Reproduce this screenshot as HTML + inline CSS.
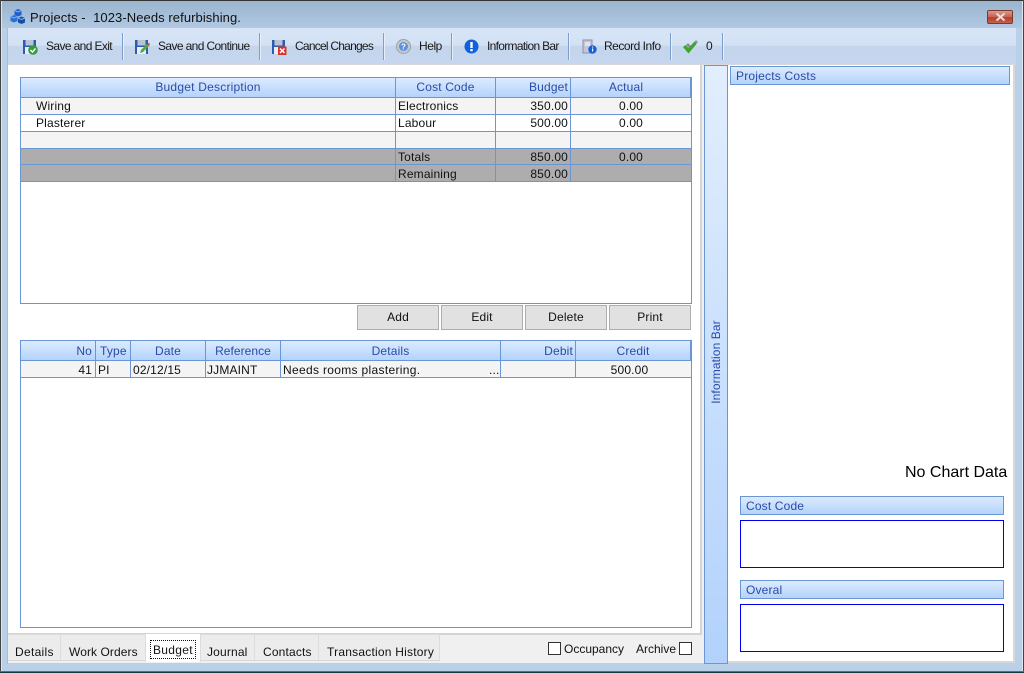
<!DOCTYPE html>
<html><head><meta charset="utf-8"><style>
html,body{margin:0;padding:0;background:#fff}
#w{position:relative;width:1024px;height:673px;overflow:hidden;font:12px/14px "Liberation Sans",sans-serif;letter-spacing:.16px;color:#111;background:#b9d0e8}
#w div,#w span.a,#w svg{position:absolute}
.t{white-space:nowrap;line-height:14px}
.h{color:#2a4ba6;letter-spacing:.16px}
.c{text-align:center}.r{text-align:right}
.hd{background:linear-gradient(#dcebfe,#b4d3fc)}
.sep{width:1px;height:27px;top:33px;background:#7d9fd0;box-shadow:1px 0 0 #e6eefa}
.ln{background:#6a96d6}
.btn{top:305px;width:80px;height:23px;background:#e1e1e1;border:1px solid #adadad;text-align:center;line-height:23px}
.tab{top:640px;white-space:nowrap;line-height:14px}
.tb{top:39px;white-space:nowrap;line-height:14px;color:#1a1a1a;letter-spacing:-.62px}
</style></head><body><div id="w">
<div style="left:0;top:0;width:1024px;height:1px;background:#333"></div>
<div style="left:1px;top:1px;width:1022px;height:27px;background:linear-gradient(#9bb5cf,#b0c8e2)"></div>
<div style="left:0;top:0;width:1px;height:673px;background:#444"></div>
<div style="left:1023px;top:0;width:1px;height:673px;background:#444"></div>
<div style="left:0;top:671px;width:1024px;height:2px;background:linear-gradient(#2fa9c4,#111)"></div>
<div style="left:1px;top:1px;width:1px;height:670px;background:#dbe6f1"></div>
<div style="left:1022px;top:1px;width:1px;height:670px;background:#dbe6f1"></div>
<div style="left:7px;top:28px;width:1px;height:636px;background:#a9bdd3"></div>

<svg style="left:10px;top:9px" width="16" height="16" viewBox="0 0 16 16"><path d="M4.500 1.500L8 0l3.500 1.500V6L8 7.500 4.500 6z" fill="#1f5fc4"/><path d="M0.500 7.500L4 6l3.500 1.500V12L4 13.500.5 12z" fill="#2a6fd6"/><path d="M8 9l3.500-1.500L15 9v4.500L11.500 15 8 13.500z" fill="#174ea6"/><path d="M4.500 1.500L8 3l3.500-1.500M.5 7.500L4 9l3.500-1.500M8 9l3.500 1.500L15 9" stroke="#7fb2f2" fill="none"/></svg>
<div class="t" style="left:30px;top:11px;color:#111;font-size:13px;letter-spacing:.08px">Projects -&nbsp; 1023-Needs refurbishing.</div>
<div style="left:987px;top:10px;width:26px;height:14px;border:1px solid #7a3a32;border-radius:2px;box-sizing:border-box;background:linear-gradient(#dc9a8c 0,#c7604f 50%,#b13e2d 55%,#c8604c 100%)"></div>
<svg style="left:995px;top:13px" width="11" height="8" viewBox="0 0 11 8"><path d="M1.500 .5l8 7M9.500 .5l-8 7" stroke="#e6e0dc" stroke-width="2"/></svg>

<div style="left:8px;top:28px;width:1008px;height:36px;background:linear-gradient(#d7e5f7 0,#d3e1f4 48%,#c4d5ec 50%,#c5d6ee 100%)"></div>
<div class="sep" style="left:122px"></div><div class="sep" style="left:259px"></div><div class="sep" style="left:383px"></div><div class="sep" style="left:451px"></div><div class="sep" style="left:568px"></div><div class="sep" style="left:670px"></div><div class="sep" style="left:722px"></div>

<svg style="left:23px;top:40px" width="15" height="15" viewBox="0 0 15 15"><path d="M0 0h13v14H0z" fill="#2b5cb0"/><path d="M2.500 0h8v5.500h-8z" fill="#b9c3d3"/><path d="M2 7h9v7H2z" fill="#e9eef5"/><circle cx="10" cy="10" r="4.800" fill="#2f9e3a"/><path d="M7.500 10l2 2 3-3.500" stroke="#fff" stroke-width="1.500" fill="none"/></svg>
<div class="tb" style="left:46px">Save and Exit</div>
<svg style="left:135px;top:40px" width="15" height="15" viewBox="0 0 15 15"><path d="M0 0h13v14H0z" fill="#2b5cb0"/><path d="M2.500 0h8v5.500h-8z" fill="#b9c3d3"/><path d="M2 7h9v7H2z" fill="#e9eef5"/><path d="M5 13l1-3 6-6 2 2-6 6z" fill="#55a83a"/><path d="M12 4l2 2 1-2-1-1z" fill="#d9443a"/></svg>
<div class="tb" style="left:158px">Save and Continue</div>
<svg style="left:272px;top:40px" width="15" height="15" viewBox="0 0 15 15"><path d="M0 0h13v14H0z" fill="#2b5cb0"/><path d="M2.500 0h8v5.500h-8z" fill="#b9c3d3"/><path d="M2 7h9v7H2z" fill="#e9eef5"/><path d="M6 6.500h8.500V15H6z" fill="#d9342b"/><path d="M8 8.500l4.500 4.500M12.500 8.500L8 13" stroke="#fff" stroke-width="1.500"/></svg>
<div class="tb" style="left:295px;letter-spacing:-.76px">Cancel Changes</div>
<svg style="left:396px;top:39px" width="15" height="15" viewBox="0 0 15 15"><circle cx="7.500" cy="7.500" r="7" fill="#c3c8cf" stroke="#9aa1ab"/><circle cx="7.500" cy="7.500" r="4.500" fill="#5c8fdc"/><text x="7.500" y="10.500" font-size="8" font-weight="bold" text-anchor="middle" fill="#fff" font-family="Liberation Sans">?</text></svg>
<div class="tb" style="left:419px;letter-spacing:-.45px">Help</div>
<svg style="left:464px;top:39px" width="15" height="15" viewBox="0 0 15 15"><circle cx="7.500" cy="7.500" r="7" fill="#1460d8"/><path d="M6.300 3h2.400v6H6.300zM6.300 10h2.400v2.200H6.300z" fill="#fff"/></svg>
<div class="tb" style="left:487px;letter-spacing:-.69px">Information Bar</div>
<svg style="left:582px;top:39px" width="15" height="15" viewBox="0 0 15 15"><path d="M1 1h9v13H1z" fill="#c4c6d8" stroke="#8d90a8"/><path d="M3 4h5M3 6h5" stroke="#fff"/><circle cx="10.500" cy="10.500" r="4.200" fill="#1460d8"/><path d="M10 7.500h1.200v1H10zM10 9.500h1.200v3H10z" fill="#fff"/></svg>
<div class="tb" style="left:604px;letter-spacing:-.48px">Record Info</div>
<svg style="left:682px;top:39px" width="16" height="15" viewBox="0 0 16 15"><path d="M4 6l2-2 3 3 5-6 2 2-7 8z" fill="#8d90a0"/><path d="M1 8l2.500-2 3 3 6-6.500 2 2.500-8 9.500z" fill="#3fa52f"/></svg>
<div class="tb" style="left:706px;letter-spacing:0">0</div>

<!-- left panel -->
<div style="left:8px;top:64px;width:1008px;height:1px;background:#d8d8d8"></div>
<div style="left:8px;top:65px;width:692px;height:568px;background:#fff;border-right:2px solid #d4d4d4;border-bottom:2px solid #d4d4d4;box-sizing:content-box"></div>
<div style="left:8px;top:635px;width:694px;height:28px;background:#f0f0f0"></div>
<div style="left:702px;top:65px;width:2px;height:598px;background:#f0f0f0"></div>

<!-- grid 1 -->
<div style="left:20px;top:77px;width:670px;height:225px;border:1px solid #6a96d6;background:#fff"></div>
<div class="hd" style="left:21px;top:78px;width:670px;height:19px"></div>
<div style="left:21px;top:98px;width:670px;height:16px;background:#f4f4f4"></div>
<div style="left:21px;top:132px;width:670px;height:16px;background:#f4f4f4"></div>
<div style="left:21px;top:149px;width:670px;height:32px;background:#adadad"></div>
<div class="ln" style="left:21px;top:97px;width:670px;height:1px"></div>
<div class="ln" style="left:21px;top:114px;width:670px;height:1px"></div>
<div class="ln" style="left:21px;top:131px;width:670px;height:1px"></div>
<div class="ln" style="left:21px;top:148px;width:670px;height:1px"></div>
<div class="ln" style="left:21px;top:164px;width:670px;height:1px"></div>
<div class="ln" style="left:21px;top:181px;width:670px;height:1px"></div>
<div class="ln" style="left:395px;top:78px;width:1px;height:103px"></div>
<div class="ln" style="left:495px;top:78px;width:1px;height:103px"></div>
<div class="ln" style="left:570px;top:78px;width:1px;height:103px"></div>
<div class="ln" style="left:690px;top:78px;width:2px;height:19px"></div>
<div class="t h c" style="left:21px;width:374px;top:80px;letter-spacing:.22px">Budget Description</div>
<div class="t h c" style="left:396px;width:99px;top:80px">Cost Code</div>
<div class="t h r" style="left:496px;width:72px;top:80px">Budget</div>
<div class="t h c" style="left:571px;width:110px;top:80px">Actual</div>
<div class="t" style="left:36px;top:99px">Wiring</div>
<div class="t" style="left:398px;top:99px">Electronics</div>
<div class="t r" style="left:496px;width:72px;top:99px">350.00</div>
<div class="t" style="left:619px;top:99px">0.00</div>
<div class="t" style="left:36px;top:116px">Plasterer</div>
<div class="t" style="left:398px;top:116px">Labour</div>
<div class="t r" style="left:496px;width:72px;top:116px">500.00</div>
<div class="t" style="left:619px;top:116px">0.00</div>
<div class="t" style="left:398px;top:150px">Totals</div>
<div class="t r" style="left:496px;width:72px;top:150px">850.00</div>
<div class="t" style="left:619px;top:150px">0.00</div>
<div class="t" style="left:398px;top:167px">Remaining</div>
<div class="t r" style="left:496px;width:72px;top:167px">850.00</div>

<div class="btn" style="left:357px">Add</div>
<div class="btn" style="left:441px">Edit</div>
<div class="btn" style="left:525px">Delete</div>
<div class="btn" style="left:609px">Print</div>

<!-- grid 2 -->
<div style="left:20px;top:340px;width:670px;height:286px;border:1px solid #6a96d6;background:#fff"></div>
<div class="hd" style="left:21px;top:341px;width:670px;height:19px"></div>
<div style="left:21px;top:361px;width:670px;height:16px;background:#f4f4f4"></div>
<div class="ln" style="left:21px;top:360px;width:670px;height:1px"></div>
<div class="ln" style="left:21px;top:377px;width:670px;height:1px"></div>
<div class="ln" style="left:95px;top:341px;width:1px;height:36px"></div>
<div class="ln" style="left:130px;top:341px;width:1px;height:36px"></div>
<div class="ln" style="left:205px;top:341px;width:1px;height:36px"></div>
<div class="ln" style="left:280px;top:341px;width:1px;height:36px"></div>
<div class="ln" style="left:500px;top:341px;width:1px;height:36px"></div>
<div class="ln" style="left:575px;top:341px;width:1px;height:36px"></div>
<div class="ln" style="left:690px;top:341px;width:2px;height:19px"></div>
<div class="t h r" style="left:21px;width:71px;top:344px">No</div>
<div class="t h" style="left:100px;top:344px">Type</div>
<div class="t h c" style="left:131px;width:74px;top:344px">Date</div>
<div class="t h c" style="left:206px;width:74px;top:344px;letter-spacing:.05px">Reference</div>
<div class="t h c" style="left:281px;width:219px;top:344px">Details</div>
<div class="t h r" style="left:501px;width:72px;top:344px">Debit</div>
<div class="t h c" style="left:576px;width:114px;top:344px">Credit</div>
<div class="t r" style="left:21px;width:71px;top:363px">41</div>
<div class="t" style="left:98px;top:363px">PI</div>
<div class="t" style="left:133px;top:363px">02/12/15</div>
<div class="t" style="left:207px;top:363px">JJMAINT</div>
<div class="t" style="left:283px;top:363px;letter-spacing:.32px">Needs rooms plastering.</div>
<div class="t" style="left:489px;top:363px">...</div>
<div class="t c" style="left:576px;width:107px;top:363px">500.00</div>

<!-- tabs -->
<div style="left:8px;top:634px;width:432px;height:27px;background:#ececec"></div>
<div style="left:8px;top:634px;width:432px;height:1px;background:#dcdcdc"></div>
<div style="left:8px;top:660px;width:137px;height:1px;background:#d8d8d8"></div>
<div style="left:200px;top:660px;width:240px;height:1px;background:#d8d8d8"></div>
<div style="left:60px;top:634px;width:1px;height:26px;background:#dcdcdc"></div>
<div style="left:254px;top:634px;width:1px;height:26px;background:#dcdcdc"></div>
<div style="left:318px;top:634px;width:1px;height:26px;background:#dcdcdc"></div>
<div style="left:439px;top:634px;width:1px;height:26px;background:#dcdcdc"></div>
<div style="left:145px;top:634px;width:56px;height:28px;background:#fff;border-left:1px solid #dcdcdc;border-right:1px solid #dcdcdc;box-sizing:border-box"></div>
<div style="left:150px;top:640px;width:46px;height:19px;border:1px dotted #111;box-sizing:border-box"></div>
<div class="tab" style="left:15px;top:645px;letter-spacing:.3px">Details</div>
<div class="tab" style="left:69px;top:645px;letter-spacing:.08px">Work Orders</div>
<div class="tab" style="left:153px;top:643px;letter-spacing:.3px">Budget</div>
<div class="tab" style="left:207px;top:645px">Journal</div>
<div class="tab" style="left:263px;top:645px">Contacts</div>
<div class="tab" style="left:327px;top:645px;letter-spacing:.22px">Transaction History</div>

<div style="left:548px;top:642px;width:11px;height:11px;border:1px solid #333;background:#fff"></div>
<div class="tab" style="left:564px;top:642px;letter-spacing:0">Occupancy</div>
<div class="tab" style="left:636px;top:642px;letter-spacing:0">Archive</div>
<div style="left:679px;top:642px;width:11px;height:11px;border:1px solid #333;background:#fff"></div>

<!-- info bar -->
<div style="left:704px;top:65px;width:22px;height:597px;border:1px solid #6a96d6;background:linear-gradient(#e2eefe,#b2d2fc)"></div>
<div class="t h" style="left:666px;top:355px;width:100px;text-align:center;transform:rotate(-90deg);letter-spacing:.1px">Information Bar</div>

<!-- right panel -->
<div style="left:728px;top:65px;width:286px;height:598px;background:#fff"></div>
<div style="left:728px;top:661px;width:286px;height:2px;background:#d8d8d8"></div>
<div style="left:1013px;top:65px;width:2px;height:598px;background:#d8d8d8"></div>
<div class="hd" style="left:730px;top:66px;width:278px;height:17px;border:1px solid #6a96d6"></div>
<div class="t h" style="left:736px;top:69px;letter-spacing:.2px">Projects Costs</div>
<div class="t" style="left:905px;top:464px;font-size:16px;line-height:18px;color:#000;letter-spacing:0">No Chart Data</div>
<div class="hd" style="left:740px;top:496px;width:262px;height:17px;border:1px solid #6a96d6"></div>
<div class="t h" style="left:746px;top:499px">Cost Code</div>
<div style="left:740px;top:520px;width:262px;height:46px;border:1px solid #0000f0"></div>
<div class="hd" style="left:740px;top:580px;width:262px;height:17px;border:1px solid #6a96d6"></div>
<div class="t h" style="left:746px;top:583px">Overal</div>
<div style="left:740px;top:604px;width:262px;height:46px;border:1px solid #0000f0"></div>
</div></body></html>
